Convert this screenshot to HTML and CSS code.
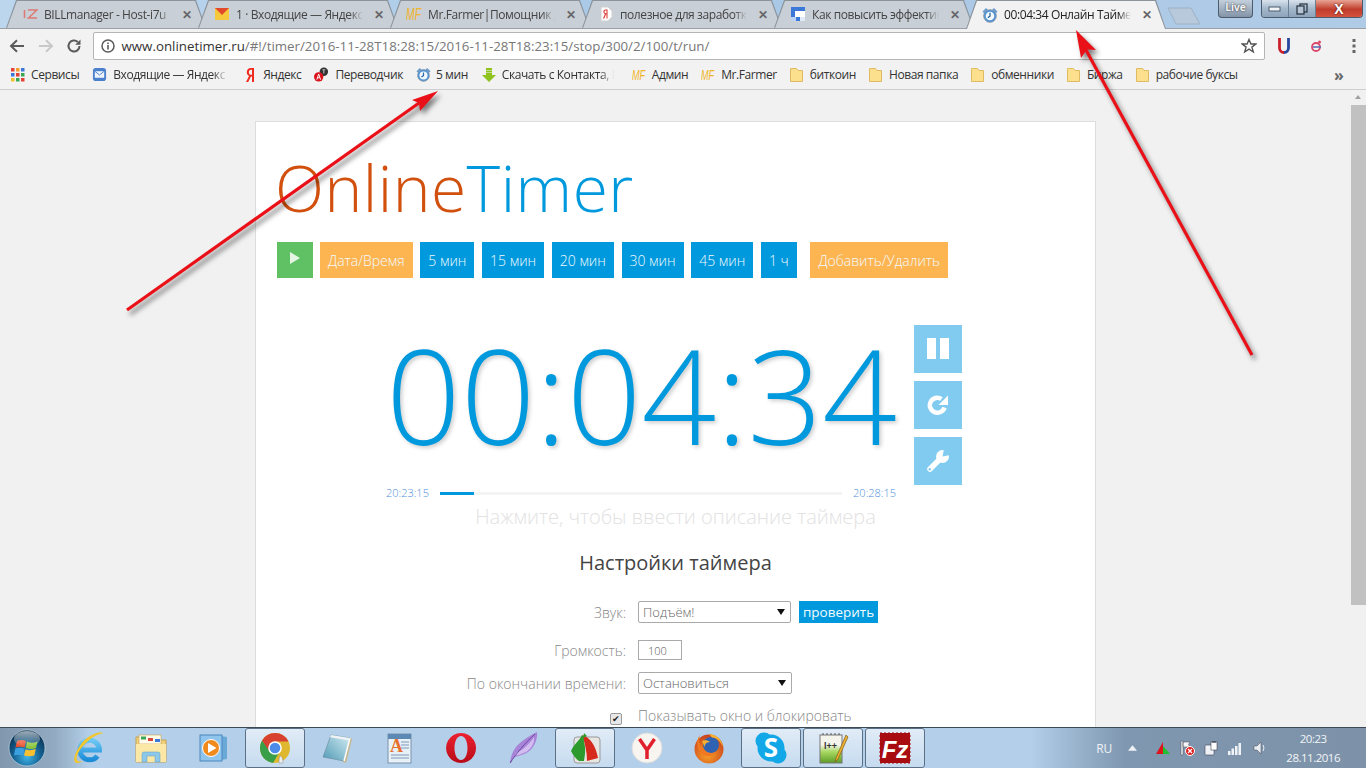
FILE: index.html
```html
<!DOCTYPE html>
<html lang="ru">
<head>
<meta charset="utf-8">
<title>00:04:34 Онлайн Таймер</title>
<link rel="stylesheet" href="styles.css">
</head>
<body>
<svg class="defs" width="0" height="0">
  <defs>
    <symbol id="alarm" viewBox="0 0 16 16">
      <path d="M.5 4.500L4 1L6 2.800L2.300 6.500Z M15.500 4.500L12 1L10 2.800L13.700 6.500Z" fill="#6f9fd0"/>
      <circle cx="8" cy="9" r="6.300" fill="#4f94d8" stroke="#87929c" stroke-width=".8"/>
      <circle cx="8" cy="9" r="4.300" fill="#f2f8fd"/>
      <path d="M8 5.800V9.200L5.800 10.600" fill="none" stroke="#2c6aa5" stroke-width="1.300"/>
    </symbol>
    <symbol id="folder" viewBox="0 0 13 16">
      <path d="M.5 1.500H6.500L8 3.500H12.500V14.500H.5Z" fill="#fde08d" stroke="#dfba62"/>
    </symbol>
  </defs>
</svg>

<header class="tabstrip">
  <div class="tab">
    <svg class="ico16" viewBox="0 0 16 16"><path d="M2.500 4V12M6 4H15L6.500 12H15" fill="none" stroke="#dc7a74" stroke-width="1.500"/></svg>
    <span class="tab-title">BILLmanager - Host-i7u</span><span class="tab-x">✕</span>
  </div>
  <div class="tab">
    <svg class="ico16" viewBox="0 0 16 16"><rect x="1" y="2" width="14" height="12" fill="#f6c83c"/><path d="M1 2H15L8 9Z" fill="#e2492a"/></svg>
    <span class="tab-title">1 · Входящие — Яндекс</span><span class="tab-x">✕</span>
  </div>
  <div class="tab">
    <svg class="mf" viewBox="0 0 16 16"><text class="mf-t" x="0" y="14" textLength="15" lengthAdjust="spacingAndGlyphs">MF</text></svg>
    <span class="tab-title">Mr.Farmer|Помощник д</span><span class="tab-x">✕</span>
  </div>
  <div class="tab">
    <svg class="ico16" viewBox="0 0 16 16"><path d="M3 1H10L14 5V11L10 15H3Z" fill="#fff" stroke="#cfcfcf"/><path d="M9.500 3.500H7.600C6 3.500 5.400 4.800 5.400 5.800C5.400 6.900 6 7.600 6.900 8L5 12.500H6.300L8 8.300H8.500V12.500H9.500ZM8.500 4.500V7.300H7.900C7 7.300 6.500 6.700 6.500 5.800C6.500 5 7 4.500 7.900 4.500Z" fill="#d9302b"/></svg>
    <span class="tab-title">полезное для заработка</span><span class="tab-x">✕</span>
  </div>
  <div class="tab">
    <svg class="ico16" viewBox="0 0 16 16"><rect x="1" y="1" width="14" height="14" fill="#3b78d8"/><rect x="5" y="5" width="10" height="6" fill="#fff"/><rect x="1" y="11" width="5" height="4" fill="#bcd3f5"/><rect x="10" y="11" width="5" height="4" fill="#dfe9f8"/></svg>
    <span class="tab-title">Как повысить эффектив</span><span class="tab-x">✕</span>
  </div>
  <div class="tab tab-active">
    <svg class="ico16"><use href="#alarm"/></svg>
    <span class="tab-title">00:04:34 Онлайн Таймер</span><span class="tab-x">✕</span>
  </div>
  <svg class="newtab" width="34" height="18" viewBox="0 0 34 18"><path d="M1 1H24L33 17H9Z" fill="#b7c9da" stroke="#9db2c6"/></svg>
  <div class="winctl">
    <div class="live">Live</div>
    <div class="winbtns">
      <div class="winbtn"><svg width="14" height="8" viewBox="0 0 14 8"><rect x="1" y="2" width="11" height="4" fill="#f2f5f8" stroke="#4d5c6c"/></svg></div>
      <div class="winbtn"><svg width="12" height="12" viewBox="0 0 12 12"><rect x="4" y="1" width="7" height="8" fill="none" stroke="#2e3a46" stroke-width="1.300"/><rect x="1" y="3" width="7" height="8" fill="#b6c6d4" stroke="#2e3a46" stroke-width="1.300"/></svg></div>
      <div class="winbtn winclose"><span>X</span></div>
    </div>
  </div>
</header>

<nav class="toolbar">
  <svg class="navicon" viewBox="0 0 16 16"><path d="M15 8H2.500M8 2.200L2 8L8 13.800" fill="none" stroke="#5a5a5a" stroke-width="2"/></svg>
  <svg class="navicon" viewBox="0 0 16 16"><path d="M1 8H13.500M8 2.200L14 8L8 13.800" fill="none" stroke="#c8c8c8" stroke-width="2"/></svg>
  <svg class="navicon" viewBox="0 0 16 16"><path d="M13.500 8A5.500 5.500 0 1 1 11.800 4" fill="none" stroke="#5a5a5a" stroke-width="2"/><path d="M14.500 1.500V6.800H9.200Z" fill="#5a5a5a"/></svg>
  <div class="omnibox">
    <svg class="info" viewBox="0 0 14 14"><circle cx="7" cy="7" r="6" fill="none" stroke="#5a5a5a" stroke-width="1.500"/><rect x="6.200" y="6" width="1.600" height="4.500" fill="#5a5a5a"/><rect x="6.200" y="3.500" width="1.600" height="1.600" fill="#5a5a5a"/></svg>
    <span class="url"><span class="url-host">www.onlinetimer.ru</span>/#!/timer/2016-11-28T18:28:15/2016-11-28T18:23:15/stop/300/2/100/t/run/</span>
    <svg class="star" viewBox="0 0 16 16"><path d="M8 1.500L9.900 6H14.800L10.900 9.100L12.300 14L8 11.200L3.700 14L5.100 9.100L1.200 6H6.100Z" fill="none" stroke="#555" stroke-width="1.400"/></svg>
  </div>
  <svg class="ext-u" viewBox="0 0 14 18"><path d="M2.500 1V11A4.500 4.500 0 0 0 7 15.500" fill="none" stroke="#c8202c" stroke-width="2.800"/><path d="M11.500 1V11A4.500 4.500 0 0 1 7 15.500" fill="none" stroke="#27469e" stroke-width="2.800"/></svg>
  <svg class="ext-g" viewBox="0 0 14 14"><circle cx="6" cy="8" r="4" fill="none" stroke="#d8476a" stroke-width="1.800"/><path d="M3 8H11" stroke="#5a6fb8" stroke-width="1.600"/><circle cx="9.500" cy="3" r="1.500" fill="#d8476a"/></svg>
  <svg class="menu-dots" viewBox="0 0 4 16"><rect x=".5" y="1" width="3" height="3" fill="#666"/><rect x=".5" y="6.500" width="3" height="3" fill="#666"/><rect x=".5" y="12" width="3" height="3" fill="#666"/></svg>
</nav>

<nav class="bookmarks">
  <div class="bm">
    <svg class="ico14" viewBox="0 0 14 14"><g><rect x="0" y="0" width="3.500" height="3.500" fill="#e34234"/><rect x="5" y="0" width="3.500" height="3.500" fill="#f0a030"/><rect x="10" y="0" width="3.500" height="3.500" fill="#3c78d8"/><rect x="0" y="5" width="3.500" height="3.500" fill="#3c78d8"/><rect x="5" y="5" width="3.500" height="3.500" fill="#e34234"/><rect x="10" y="5" width="3.500" height="3.500" fill="#3aa757"/><rect x="0" y="10" width="3.500" height="3.500" fill="#f0c030"/><rect x="5" y="10" width="3.500" height="3.500" fill="#3aa757"/><rect x="10" y="10" width="3.500" height="3.500" fill="#e34234"/></g></svg>
    <span class="bm-t">Сервисы</span>
  </div>
  <div class="bm">
    <svg class="ico15" viewBox="0 0 16 16"><rect x="1" y="1" width="14" height="14" rx="3" fill="#4a80cc"/><rect x="3" y="4.500" width="10" height="7" fill="#eef4fc"/><path d="M3 4.500L8 8.500L13 4.500" fill="none" stroke="#4a80cc"/></svg>
    <span class="bm-t bm-fade bm-w119">Входящие — Яндекс</span>
  </div>
  <div class="bm">
    <svg class="ico-ya" viewBox="0 0 12 16"><path d="M8.500 1H6C3.200 1 1.800 3 1.800 5.200C1.800 7 2.600 8.200 4 9L1 15H3.200L6 9.400H7V15H9V1ZM7 2.700V7.800H6.200C4.700 7.800 3.900 6.800 3.900 5.200C3.900 3.700 4.700 2.700 6.200 2.700Z" fill="#f02b1d"/></svg>
    <span class="bm-t">Яндекс</span>
  </div>
  <div class="bm">
    <svg class="ico15" viewBox="0 0 16 16"><circle cx="10.500" cy="5" r="4.500" fill="#333"/><circle cx="5" cy="10.500" r="5" fill="#d9141c"/><path d="M3 13.500L5 7.500L7 13.500M3.800 11.500H6.200" fill="none" stroke="#fff" stroke-width="1"/><path d="M9 3H12M10.500 3V7" stroke="#ccc" stroke-width="1"/></svg>
    <span class="bm-t">Переводчик</span>
  </div>
  <div class="bm bm-tight">
    <svg class="ico15"><use href="#alarm"/></svg>
    <span class="bm-t">5 мин</span>
  </div>
  <div class="bm bm-tight">
    <svg class="ico16" viewBox="0 0 16 16"><path d="M5 1H11V3H5ZM5 3.500H11V5H5ZM5 5.500H11V8H15L8 15L1 8H5Z" fill="#8fc31f"/></svg>
    <span class="bm-t bm-fade bm-w117">Скачать с Контакта, К</span>
  </div>
  <div class="bm"><svg class="mf" viewBox="0 0 16 16"><text class="mf-t" x="0" y="14" textLength="15" lengthAdjust="spacingAndGlyphs">MF</text></svg><span class="bm-t">Админ</span></div>
  <div class="bm"><svg class="mf" viewBox="0 0 16 16"><text class="mf-t" x="0" y="14" textLength="15" lengthAdjust="spacingAndGlyphs">MF</text></svg><span class="bm-t">Mr.Farmer</span></div>
  <div class="bm"><svg class="ico-f"><use href="#folder"/></svg><span class="bm-t">биткоин</span></div>
  <div class="bm"><svg class="ico-f"><use href="#folder"/></svg><span class="bm-t">Новая папка</span></div>
  <div class="bm"><svg class="ico-f"><use href="#folder"/></svg><span class="bm-t">обменники</span></div>
  <div class="bm"><svg class="ico-f"><use href="#folder"/></svg><span class="bm-t">Биржа</span></div>
  <div class="bm"><svg class="ico-f"><use href="#folder"/></svg><span class="bm-t">рабочие буксы</span></div>
  <div class="bm-more">»</div>
</nav>

<div class="viewport">
  <main class="page">
    <article class="card">
      <h1 class="logo"><span class="logo-a">Online</span><span class="logo-b">Timer</span></h1>
      <div class="presets">
        <a class="pbtn pbtn-go"><svg width="10" height="12" viewBox="0 0 10 12"><path d="M0 0L10 6L0 12Z" fill="#e4f5e4"/></svg></a>
        <a class="pbtn pbtn-or">Дата/Время</a>
        <a class="pbtn">5 мин</a>
        <a class="pbtn">15 мин</a>
        <a class="pbtn">20 мин</a>
        <a class="pbtn">30 мин</a>
        <a class="pbtn">45 мин</a>
        <a class="pbtn">1 ч</a>
        <a class="pbtn pbtn-or pbtn-last">Добавить/Удалить</a>
      </div>
      <section class="timer">
        <div class="timer-main">
          <div class="clock">00:04:34</div>
          <div class="progress">
            <span class="ptime">20:23:15</span>
            <div class="ptrack"><div class="pfill" style="width:8.500%"></div></div>
            <span class="ptime">20:28:15</span>
          </div>
        </div>
        <div class="side">
          <a class="sbtn"><svg width="22" height="22" viewBox="0 0 22 22"><rect x="0" y="0" width="9" height="21" fill="#fff"/><rect x="13" y="0" width="9" height="21" fill="#fff"/></svg></a>
          <a class="sbtn"><svg width="22" height="22" viewBox="0 0 22 22"><path d="M17.500 13.500A7.500 7.500 0 1 1 14.500 5" fill="none" stroke="#fff" stroke-width="4.500"/><path d="M21 1.500V11H11.500Z" fill="#fff"/></svg></a>
          <a class="sbtn"><svg width="24" height="24" viewBox="0 0 24 24"><path d="M4 20L15 9" stroke="#fff" stroke-width="5.500" stroke-linecap="round"/><circle cx="16.500" cy="7.500" r="6.500" fill="#fff"/><path d="M16.500 7.500L18 0H24V6Z" fill="#80cbef"/><circle cx="3.800" cy="20.200" r="1.200" fill="#80cbef"/></svg></a>
        </div>
      </section>
      <p class="desc">Нажмите, чтобы ввести описание таймера</p>
      <h2 class="settings-h">Настройки таймера</h2>
      <form class="settings">
        <div class="row row-sound">
          <label class="lbl">Звук:</label>
          <div class="selwrap"><select class="sel sel-a"><option>Подъём!</option></select></div>
          <button type="button" class="check">проверить</button>
        </div>
        <div class="row row-vol">
          <label class="lbl">Громкость:</label>
          <input class="vol" type="text" value="100">
        </div>
        <div class="row row-end">
          <label class="lbl">По окончании времени:</label>
          <div class="selwrap"><select class="sel sel-b"><option>Остановиться</option></select></div>
        </div>
        <div class="row row-chk">
          <div class="lbl lbl-chk"><span class="chk">✔</span></div>
          <span class="chk-t">Показывать окно и блокировать</span>
        </div>
      </form>
    </article>
  </main>
  <aside class="scrollbar">
    <div class="sb-up"></div>
    <div class="sb-thumb"></div>
  </aside>
</div>

<footer class="taskbar">
  <div class="start">
    <svg width="38" height="38" viewBox="0 0 38 38">
      <defs>
        <radialGradient id="orb" cx="50%" cy="75%" r="70%"><stop offset="0" stop-color="#3fb4e8"/><stop offset=".55" stop-color="#145f90"/><stop offset="1" stop-color="#0a2f4c"/></radialGradient>
        <linearGradient id="gloss" x1="0" y1="0" x2="0" y2="1"><stop offset="0" stop-color="#fff" stop-opacity=".6"/><stop offset="1" stop-color="#fff" stop-opacity=".05"/></linearGradient>
      </defs>
      <circle cx="19" cy="19" r="18" fill="url(#orb)" stroke="#d4e2ee" stroke-opacity=".6"/>
      <path d="M9 12Q13 10 18 12L16.500 18.500Q12 17 7.500 18.500Z" fill="#e8502c"/>
      <path d="M19 12.500Q24 15 29.500 12.500L28 19Q23 21 17.800 19Z" fill="#8cc63f"/>
      <path d="M7.300 19.500Q12 18 16.300 20L15 26.500Q10.500 25 6 26.500Z" fill="#3aa0e0"/>
      <path d="M17.500 20.500Q22.500 22 27.800 20L26.300 26.500Q21 28 16 26.500Z" fill="#f8c030"/>
      <ellipse cx="19" cy="10" rx="13" ry="8" fill="url(#gloss)"/>
    </svg>
  </div>
  <div class="tb">
    <svg class="tbi" viewBox="0 0 32 32"><defs><linearGradient id="iee" x1="0" y1="0" x2="0" y2="1"><stop offset="0" stop-color="#6cc8f4"/><stop offset="1" stop-color="#1c8cd8"/></linearGradient></defs><path d="M7.500 18H26.500A9.800 9.800 0 1 0 24.500 24" fill="none" stroke="url(#iee)" stroke-width="5"/><path d="M2 30C-1 26 6 12 14 6C21 1 29 -1 30 2C28 1 22 3 15 9C8 15 2 24 4 28C4.500 29.500 7 30 10 29C6 31.500 3 31.500 2 30Z" fill="#f2c62c"/></svg>
  </div>
  <div class="tb">
    <svg class="tbi" viewBox="0 0 32 32"><path d="M1 5H12L14 8H31V30H1Z" fill="#efd07c" stroke="#c7a050"/><rect x="4" y="3" width="22" height="9" fill="#fffbe8" stroke="#c7a050" stroke-width=".6"/><rect x="6" y="4.500" width="5" height="3" fill="#3aa757"/><rect x="13" y="6" width="5" height="3" fill="#d9483b"/><rect x="20" y="7" width="5" height="3" fill="#3c78d8"/><path d="M1 12H31V30H1Z" fill="#fbe7a6"/><path d="M7 30V22Q7 20 9 20H23Q25 20 25 22V30H20V24H12V30Z" fill="#8ec8e8" stroke="#5a9cc8" stroke-width=".5"/></svg>
  </div>
  <div class="tb">
    <svg class="tbi" viewBox="0 0 32 32"><path d="M24 4L30 5V27L24 28Z" fill="#6aa8d8"/><rect x="3" y="3" width="22" height="26" fill="#8fc4ec" stroke="#4b86bc"/><circle cx="14" cy="16" r="8.500" fill="#f08a1c" stroke="#fff"/><path d="M11 11L19.500 16L11 21Z" fill="#fff"/></svg>
  </div>
  <div class="tb tb-on">
    <svg class="tbi" viewBox="0 0 32 32"><circle cx="16" cy="16" r="15" fill="#e0b830"/><path d="M16 1A15 15 0 0 0 3 8.500L9.500 19.500 16 9.500H29.500A15 15 0 0 0 16 1Z" fill="#d8412f"/><path d="M3 8.500A15 15 0 0 0 14 30.900L20.500 20H11Z" fill="#389e48"/><circle cx="16" cy="16" r="6.800" fill="#fff"/><circle cx="16" cy="16" r="5.300" fill="#4c8be8"/><path d="M21 24C24 24 24 30 24 31H20C20 28 20 26 21 24Z" fill="#eee" stroke="#888" stroke-width=".5"/></svg>
  </div>
  <div class="tb">
    <svg class="tbi" viewBox="0 0 32 32"><defs><linearGradient id="pad" x1="0" y1="1" x2="1" y2="0"><stop offset="0" stop-color="#4f9ab4"/><stop offset="1" stop-color="#d4ecf4"/></linearGradient></defs><path d="M28 5L31 7L25 31L21 29Z" fill="#c8b68a"/><path d="M10 3L29 6L23 29L2 25Z" fill="url(#pad)" stroke="#6c8a9a" stroke-width=".6"/><path d="M23 29L29 6" stroke="#fff" stroke-width="1.500"/><path d="M10 3L29 6L28.400 8.500L9 5.200Z" fill="#eef3f5"/></svg>
  </div>
  <div class="tb">
    <svg class="tbi" viewBox="0 0 32 32"><rect x="5" y="2" width="23" height="29" fill="#e8f0f8" stroke="#7c94ac"/><rect x="5" y="2" width="23" height="5" fill="#5c88b4"/><text class="tb-a" x="7" y="20">A</text><path d="M18 10H26M18 13H26M18 16H26M8 23H26M8 26H26" stroke="#7c98b8" stroke-width="1.200"/></svg>
  </div>
  <div class="tb">
    <svg class="tbi" viewBox="0 0 32 32"><defs><linearGradient id="opr" x1="0" y1="0" x2="0" y2="1"><stop offset="0" stop-color="#ec2030"/><stop offset="1" stop-color="#b80c18"/></linearGradient></defs><path fill-rule="evenodd" d="M16 1A15 15 0 1 0 16.100 1ZM16 4C20 4 22.500 9.500 22.500 16C22.500 22.500 20 28 16 28C12 28 9.500 22.500 9.500 16C9.500 9.500 12 4 16 4Z" fill="url(#opr)"/></svg>
  </div>
  <div class="tb">
    <svg class="tbi" viewBox="0 0 32 32"><path d="M3 30C4 25 5 20 9 15C14 9 22 4 30 0C31 7 27 16 21 20C17 22.500 12 24 7 25L4 31Z" fill="#a884d8"/><path d="M9 21C14 19 22 13 27 5C28 11 24 17 19 20C15 22 11 23 8 24Z" fill="#d2bcf0"/><path d="M3 31C9 22 18 11 28 2" fill="none" stroke="#6c4aa0" stroke-width="1"/></svg>
  </div>
  <div class="tb tb-on">
    <svg class="tbi" viewBox="0 0 32 32"><rect x="5" y="5" width="26" height="26" rx="3" fill="#e6e6e2" stroke="#999"/><path d="M13 3C21 5 27 14 29 26L18 29C18 20 16 11 13 3Z" fill="#d62a1c"/><path d="M2 19C5 12 11 8 13 3C15 4 15 8 15 10C17 17 16 23 15 29L10 29C7 27 4 23 2 19Z" fill="#2c9a2c"/><path d="M15 1L18 4L14 6Z" fill="#2c9a2c"/></svg>
  </div>
  <div class="tb">
    <svg class="tbi" viewBox="0 0 32 32"><circle cx="16" cy="16" r="15" fill="#f8f4f0" stroke="#ddd"/><path d="M8.500 7L16 18V27M23.500 7L16 18" fill="none" stroke="#e0202c" stroke-width="3.500"/></svg>
  </div>
  <div class="tb">
    <svg class="tbi" viewBox="0 0 32 32"><defs><radialGradient id="ffx" cx="45%" cy="70%" r="70%"><stop offset="0" stop-color="#f8a028"/><stop offset="1" stop-color="#c8401c"/></radialGradient></defs><circle cx="16" cy="17" r="14.500" fill="url(#ffx)"/><circle cx="18" cy="13" r="8" fill="#2f62b0"/><path d="M7 3C5 9 7 14 10 16C12 21 19 23 24 19C21 24 14 26 9 22C4 18 2 9 7 3Z" fill="#f07820"/><path d="M16 2C22 2 29 7 30 15C27 9 24 6 19 5.500Z" fill="#f8b030"/><path d="M9 9C11 8 15 8 17 10C13 10 11 13 12 16Z" fill="#f8b030"/></svg>
  </div>
  <div class="tb tb-on">
    <svg class="tbi" viewBox="0 0 32 32"><circle cx="9" cy="9" r="8.500" fill="#12a8e8"/><circle cx="23" cy="23" r="8.500" fill="#12a8e8"/><circle cx="16" cy="16" r="13.500" fill="#12a8e8"/><text class="tb-s" x="16" y="25">S</text></svg>
  </div>
  <div class="tb tb-on">
    <svg class="tbi" viewBox="0 0 32 32"><defs><linearGradient id="npp" x1="0" y1="0" x2="0" y2="1"><stop offset=".35" stop-color="#f4f4ec"/><stop offset=".6" stop-color="#a8d860"/><stop offset="1" stop-color="#5c9c28"/></linearGradient></defs><rect x="3" y="3" width="22" height="28" fill="url(#npp)" stroke="#777"/><path d="M6 3V1M10 3V1M14 3V1M18 3V1M22 3V1" stroke="#555"/><text class="tb-pp" x="7" y="17">l++</text><path d="M29 3L19 26L18 30L21 27L31 5Z" fill="#f0b030" stroke="#7a5a18" stroke-width=".7"/></svg>
  </div>
  <div class="tb tb-on">
    <svg class="tbi" viewBox="0 0 32 32"><rect x="1" y="1" width="30" height="30" fill="#a80c10" stroke="#a80c10" stroke-dasharray="2 2"/><text class="tb-fz" x="16" y="26">Fz</text></svg>
  </div>
  <div class="tray">
    <span class="lang">RU</span>
    <svg class="tr tr-tri" viewBox="0 0 10 6"><path d="M5 0L10 6H0Z" fill="#eef2f6"/></svg>
    <svg class="tr" viewBox="0 0 16 16"><path d="M1 14L8 2L8 14Z" fill="#e0141c"/><path d="M8 6L15 14H8Z" fill="#20c030"/></svg>
    <svg class="tr" viewBox="0 0 16 16"><path d="M2 1H4V15H2ZM4 2H11L9.500 4.500L11 7H4Z" fill="#f4f6f8" stroke="#445" stroke-width=".5"/><circle cx="11" cy="11" r="4.500" fill="#e02020" stroke="#fff"/><path d="M9 9L13 13M13 9L9 13" stroke="#fff" stroke-width="1.200"/></svg>
    <svg class="tr" viewBox="0 0 16 16"><rect x="2" y="5" width="9" height="10" rx="1" fill="#eef2f6" stroke="#445" stroke-width=".6"/><rect x="8" y="2" width="6" height="8" fill="#fff" stroke="#445" stroke-width=".6"/><path d="M10 1V3M12 1V3" stroke="#334"/></svg>
    <svg class="tr" viewBox="0 0 16 16"><rect x="1" y="11" width="2.500" height="4" fill="#f0f4f8"/><rect x="4.500" y="8.500" width="2.500" height="6.500" fill="#f0f4f8"/><rect x="8" y="6" width="2.500" height="9" fill="#f0f4f8"/><rect x="11.500" y="3" width="2.500" height="12" fill="#f0f4f8"/></svg>
    <svg class="tr" viewBox="0 0 16 16"><path d="M3 6H6L10 2V14L6 10H3Z" fill="#e8edf2" stroke="#445" stroke-width=".5"/><path d="M12 5Q14 8 12 11" fill="none" stroke="#e8edf2"/></svg>
    <div class="clockbox"><span>20:23</span><span>28.11.2016</span></div>
  </div>
</footer>

<svg class="arrows" width="1366" height="768" viewBox="0 0 1366 768">
  <line x1="127" y1="310" x2="419" y2="103" stroke="#ea1018" stroke-width="3.200"/>
  <polygon points="438,91 420,111 419,103 412,100" fill="#ea1018"/>
  <line x1="1252" y1="355" x2="1086" y2="50" stroke="#ea1018" stroke-width="3.200"/>
  <polygon points="1076,30 1096,50 1087,49.500 1081,58" fill="#ea1018"/>
</svg>
</body>
</html>
```

FILE: styles.css
```css
* { box-sizing: border-box; }
html, body { margin: 0; height: 100%; }
body {
  width: 1366px;
  height: 768px;
  overflow: hidden;
  display: flex;
  flex-direction: column;
  position: relative;
  font-family: "Open Sans", "Noto Sans", sans-serif;
  background: #f2f2f2;
}
.defs { position: absolute; }
.ico16 { width: 16px; height: 16px; flex: none; }
.ico15 { width: 15px; height: 15px; flex: none; }
.ico14 { width: 14px; height: 14px; flex: none; }
.ico-ya { width: 12px; height: 16px; flex: none; }
.ico-f { width: 13px; height: 16px; flex: none; margin-right: 1px; }

/* tabs */
.tabstrip {
  height: 29px;
  flex: none;
  display: flex;
  padding-left: 6px;
  background: linear-gradient(90deg, #bcd6ee, #a8c8e6 50%, #b0cbe6);
  border-bottom: 1px solid #9aa0a6;
  position: relative;
}
.tab {
  width: 200px;
  height: 28px;
  margin-right: -8px;
  padding-left: 16px;
  display: flex;
  align-items: center;
  position: relative;
  font-size: 12px;
  color: #444;
  white-space: nowrap;
}
.tab::before, .tab::after {
  content: "";
  position: absolute;
  z-index: 0;
}
.tab::before {
  inset: 0;
  background: #8b939b;
  clip-path: polygon(0 100%, 10px 0, 190px 0, 100% 100%);
}
.tab::after {
  inset: 1px 1px 0 1px;
  background: #c9cfd6;
  clip-path: polygon(0 100%, 10px 0, 188px 0, 100% 100%);
}
.tab-active { z-index: 3; color: #222; height: 29px; }
.tab-active::after { background: #f2f2f2; }
.tab > * { position: relative; z-index: 1; }
.tab-title {
  margin-left: 6px;
  width: 127px;
  overflow: hidden;
  letter-spacing: -.4px;
  -webkit-mask-image: linear-gradient(90deg, #000 90%, transparent);
  mask-image: linear-gradient(90deg, #000 90%, transparent);
}
.tab-x {
  margin-left: 11px;
  font-size: 12px;
  font-weight: 700;
  color: #666;
}
.mf {
  width: 16px;
  height: 16px;
  flex: none;
}
.bm .mf { width: 14px; }
.mf-t {
  font: italic 400 17px "Liberation Sans", sans-serif;
  fill: #f0b428;
}
.newtab { flex: none; margin: 7px 0 0 9px; }
.winctl {
  position: absolute;
  right: 3px;
  top: 0;
  display: flex;
  gap: 8px;
}
.live {
  width: 35px;
  height: 18px;
  background: linear-gradient(#c4d0dc, #8294a8);
  border: 1px solid #4d5c6c;
  border-top: 0;
  border-radius: 0 0 4px 4px;
  font-size: 10px;
  font-weight: 700;
  line-height: 15px;
  text-align: center;
  color: #f4f4f4;
  text-shadow: 0 0 2px #222;
}
.winbtns {
  display: flex;
  height: 18px;
  border: 1px solid #4d5c6c;
  border-top: 0;
  border-radius: 0 0 4px 4px;
  overflow: hidden;
}
.winbtn {
  width: 27px;
  display: flex;
  align-items: center;
  justify-content: center;
  background: linear-gradient(#d8e2ec, #a4b8cc 50%, #8ea4ba);
  border-right: 1px solid #6c8094;
}
.winclose {
  width: 46px;
  border-right: 0;
  background: linear-gradient(#e8a494, #c03c2c 55%, #d4523e);
  color: #fff;
  font: 700 14px/1 "Liberation Sans", sans-serif;
  text-shadow: 0 0 2px #400;
}

/* toolbar */
.toolbar {
  height: 33px;
  flex: none;
  display: flex;
  align-items: center;
  padding-left: 9px;
  background: #f2f2f2;
}
.navicon { width: 16px; height: 16px; flex: none; margin-right: 12.500px; }
.omnibox {
  width: 1172px;
  height: 28px;
  margin-left: -2px;
  display: flex;
  align-items: center;
  background: #fff;
  border: 1px solid #b5b5b5;
  border-radius: 2px;
  padding-left: 7px;
}
.info { width: 14px; height: 14px; flex: none; }
.url {
  margin-left: 7px;
  font-size: 13.300px;
  color: #777;
  white-space: nowrap;
  flex: 1;
}
.url-host { color: #333; }
.star { width: 16px; height: 16px; margin-right: 7px; flex: none; }
.ext-u { width: 14px; height: 18px; margin-left: 12px; flex: none; }
.ext-g { width: 14px; height: 14px; margin-left: 19px; flex: none; }
.menu-dots { width: 4px; height: 16px; margin-left: 28px; flex: none; }

/* bookmarks */
.bookmarks {
  height: 28px;
  flex: none;
  display: flex;
  align-items: center;
  padding-left: 11px;
  padding-bottom: 2px;
  background: #f2f2f2;
  border-bottom: 1px solid #cfcfcf;
  position: relative;
}
.bm {
  display: flex;
  align-items: center;
  gap: 6px;
  margin-right: 13px;
  font-size: 12px;
  color: #333;
  white-space: nowrap;
}
.bm-tight { gap: 5px; }
.bm-t { letter-spacing: -.42px; }
.bm-fade {
  overflow: hidden;
  -webkit-mask-image: linear-gradient(90deg, #000 84%, transparent 96%);
  mask-image: linear-gradient(90deg, #000 84%, transparent 96%);
}
.bm-w119 { width: 119px; }
.bm-w117 { width: 117px; }
.bm-more {
  position: absolute;
  left: 1334px;
  top: 2px;
  font-size: 16px;
  font-weight: 700;
  color: #666;
}

/* page */
.viewport {
  flex: 1;
  min-height: 0;
  display: flex;
}
.page {
  flex: 1;
  min-width: 0;
  background: #f1f1f1;
  display: flex;
  justify-content: center;
  padding-top: 31px;
  overflow: hidden;
}
.card {
  width: 841px;
  height: 800px;
  flex: none;
  padding: 0 21px;
  background: #fff;
  border: 1px solid #ddd;
}
.logo {
  margin: 26px 0 0 -2px;
  font-size: 64px;
  line-height: 80px;
  font-weight: 300;
  letter-spacing: .5px;
}
.logo-a { color: #d2500e; }
.logo-b { color: #0099dd; }
.presets {
  margin-top: 14px;
  display: flex;
  gap: 7.700px;
}
.pbtn {
  height: 36px;
  padding: 0 8px;
  display: flex;
  align-items: center;
  justify-content: center;
  background: #0099dd;
  color: #f2fafe;
  font-size: 14px;
  font-weight: 300;
  white-space: nowrap;
}
.pbtn-go { width: 36px; background: #5fc164; padding: 0 0 4px; margin-right: -.700px; }
.pbtn-or { background: #fdb552; }
.pbtn-last { margin-left: 6px; }
.timer {
  margin-top: 47px;
  margin-left: 109px;
  display: flex;
  gap: 18px;
}
.timer-main { width: 510px; }
.clock {
  height: 160px;
  font-size: 131px;
  line-height: 138px;
  font-weight: 300;
  color: #0099dd;
  text-align: center;
  white-space: nowrap;
  text-shadow: 2px 2px 4px rgba(0, 0, 0, .2);
}
.progress {
  display: flex;
  align-items: center;
  gap: 11px;
}
.ptime {
  font-size: 11px;
  font-weight: 300;
  color: #4f8fdc;
  line-height: 16px;
}
.ptrack {
  flex: 1;
  height: 3px;
  background: #f4f4f4;
}
.pfill { height: 100%; background: #0099dd; }
.side {
  display: flex;
  flex-direction: column;
  gap: 8px;
}
.sbtn {
  width: 48px;
  height: 48px;
  display: flex;
  align-items: center;
  justify-content: center;
  background: #80cbef;
}
.desc {
  margin: 3px 0 0;
  text-align: center;
  font-size: 20px;
  line-height: 26px;
  font-weight: 300;
  color: #e2e2e2;
}
.settings-h {
  margin: 18px 0 0;
  text-align: center;
  font-size: 20px;
  line-height: 30px;
  font-weight: 400;
  color: #444;
}
.settings { margin-top: 23px; }
.row {
  display: flex;
  align-items: center;
  gap: 12px;
  font-size: 14px;
  color: #888;
}
.row-vol { margin-top: 17px; }
.row-end { margin-top: 12px; }
.row-chk { margin-top: 14px; align-items: flex-start; }
.lbl { width: 349px; text-align: right; font-weight: 300; }
.selwrap { position: relative; }
.selwrap::after {
  content: "";
  position: absolute;
  right: 6px;
  top: 8px;
  border: 4px solid transparent;
  border-top: 6px solid #111;
  border-bottom: 0;
}
.sel {
  display: block;
  height: 22px;
  appearance: none;
  -webkit-appearance: none;
  background: #fff;
  border: 1px solid #aaa;
  border-radius: 2px;
  padding: 0 4px;
  font: 300 13px "Open Sans", sans-serif;
  color: #666;
}
.sel-a { width: 153px; }
.sel-b { width: 154px; }
.check {
  height: 22px;
  width: 79px;
  margin-left: -4px;
  padding: 0;
  border: 0;
  background: #0099dd;
  color: #f4fbff;
  font: 400 13.500px "Open Sans", sans-serif;
}
.vol {
  width: 44px;
  height: 20px;
  padding: 0 9px;
  background: #fff;
  border: 1px solid #aaa;
  font: 300 11px "Open Sans", sans-serif;
  color: #555;
}
.lbl-chk { padding-top: 3px; padding-right: 4px; line-height: 12px; }
.chk {
  display: inline-block;
  width: 12px;
  height: 12px;
  background: #e8e8e8;
  border: 1px solid #999;
  border-radius: 2px;
  font-size: 9px;
  line-height: 10px;
  text-align: center;
  color: #222;
}
.chk-t { font-weight: 300; font-size: 14px; line-height: 16px; }

/* scrollbar */
.scrollbar {
  width: 15px;
  flex: none;
  background: #f1f1f1;
  padding-top: 15px;
  position: relative;
}
.sb-up {
  position: absolute;
  top: 5px;
  left: 4px;
  border: 3.500px solid transparent;
  border-bottom: 4px solid #a0a0a0;
  border-top: 0;
}
.sb-thumb {
  height: 500px;
  background: #c1c1c1;
}

/* taskbar */
.taskbar {
  height: 41px;
  flex: none;
  display: flex;
  gap: 2px;
  background: linear-gradient(90deg, #8097ae 0, #93abc2 55px, #b3cfea 90px, #b3cfea 1030px, #7f97b0 1125px, #7d92a8 100%);
  border-top: 1px solid #3c4a58;
  position: relative;
}
.start {
  width: 57px;
  flex: none;
  display: flex;
  align-items: center;
  justify-content: center;
  padding-right: 3px;
}
.tb {
  width: 60px;
  flex: none;
  display: flex;
  align-items: center;
  justify-content: center;
  border: 1px solid transparent;
  border-radius: 3px;
}
.tb-on {
  background: linear-gradient(rgba(255,255,255,.6), rgba(255,255,255,.25));
  border-color: #5d7186;
}
.tbi { width: 32px; height: 32px; overflow: visible; }
.tb-a { font: 700 18px "Liberation Serif", serif; fill: #e8702c; }
.tb-s { font: 700 26px "Open Sans", sans-serif; fill: #fff; text-anchor: middle; }
.tb-pp { font: 700 9px "Liberation Sans", sans-serif; fill: #333; }
.tb-fz { font: italic 700 24px "Liberation Sans", sans-serif; fill: #fff; text-anchor: middle; }
.tray {
  margin-left: auto;
  display: flex;
  align-items: center;
  padding-right: 26px;
  gap: 8px;
  color: #eef2f6;
  font-size: 12px;
}
.lang { margin-right: 8px; }
.tr { width: 16px; height: 16px; }
.tr-tri { width: 9px; height: 6px; margin-right: 10px; }
.clockbox {
  margin-left: 11px;
  display: flex;
  flex-direction: column;
  align-items: center;
  line-height: 19px;
  font-size: 11.500px;
  letter-spacing: -.5px;
  color: #f2f5f8;
}

/* overlay annotations */
.arrows {
  position: absolute;
  left: 0;
  top: 0;
  pointer-events: none;
  filter: drop-shadow(3px 4px 2.500px rgba(0, 0, 0, .5));
}
```
